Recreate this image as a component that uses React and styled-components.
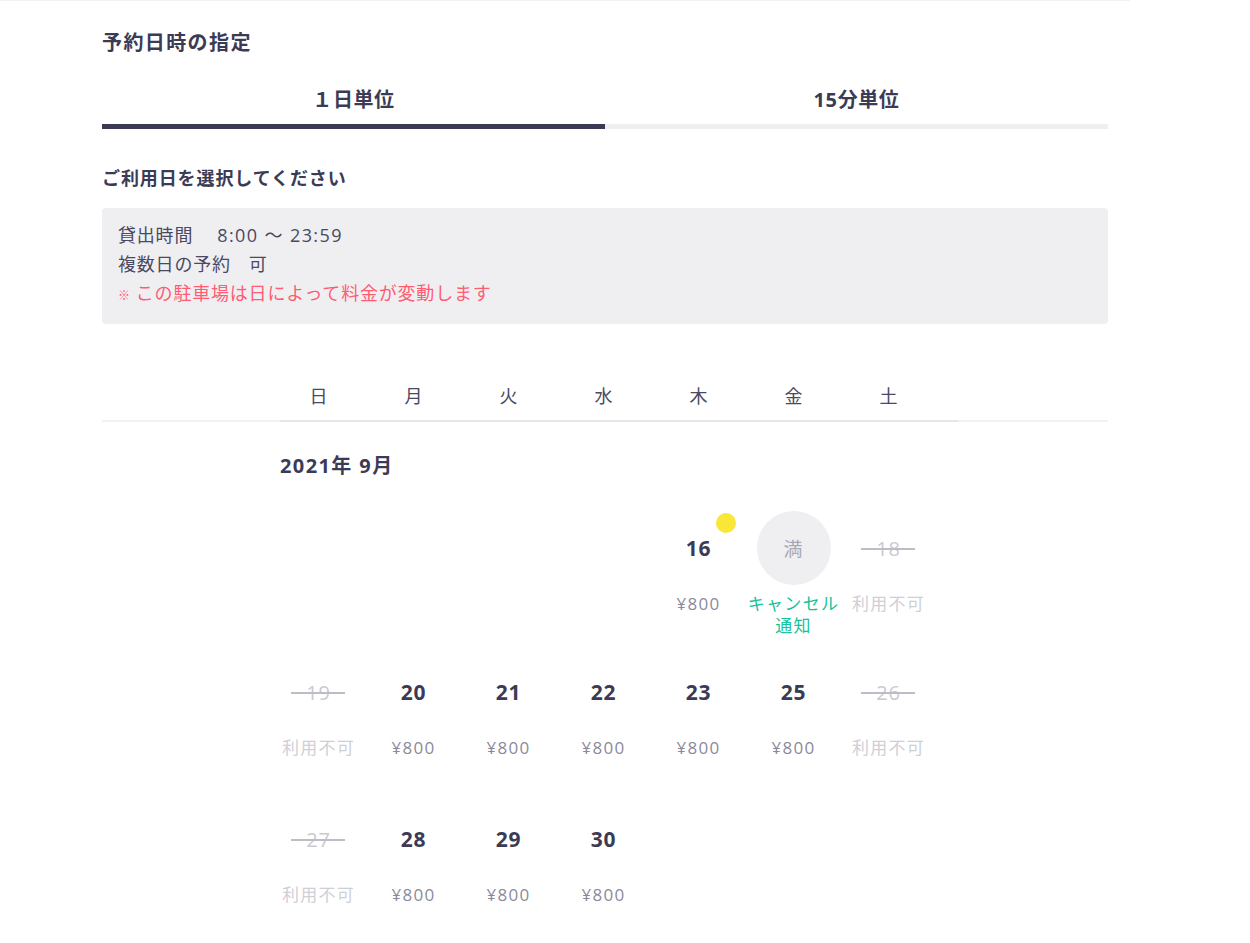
import React from "react";
import styled, { createGlobalStyle } from "styled-components";

const GlobalStyle = createGlobalStyle`
  body {
    margin: 0;
    background: #fff;
    font-family: "Open Sans", "Noto Sans CJK JP", sans-serif;
    color: #3c3b55;
  }
`;

const Page = styled.div`
  width: 1130px;
  box-sizing: border-box;
  border-top: 1px solid #f3f3f5;
  padding: 28px 0 40px 102px;
`;

const Content = styled.div`
  width: 1006px;
`;

const Title = styled.h2`
  margin: 0;
  font-size: 20px;
  font-weight: 700;
  line-height: 28px;
  letter-spacing: 1.4px;
`;

const Tabs = styled.div`
  display: flex;
  margin-top: 14px;
`;

const Tab = styled.div`
  flex: 1;
  height: 58px;
  box-sizing: border-box;
  display: flex;
  align-items: center;
  justify-content: center;
  padding-top: 2px;
  font-size: 20px;
  font-weight: 700;
  letter-spacing: 0.6px;
  border-bottom: 5px solid ${(p) => (p.active ? "#3b3a55" : "#efeff2")};
`;

const SubTitle = styled.h3`
  margin: 36px 0 0;
  font-size: 18px;
  font-weight: 700;
  line-height: 26px;
  letter-spacing: 0.9px;
`;

const InfoBox = styled.div`
  margin-top: 17px;
  background: #efeff2;
  border-radius: 4px;
  padding: 13px 16px 14px;
  font-size: 18px;
  line-height: 29px;
`;

const InfoLine = styled.div`
  color: ${(p) => (p.warn ? "#ff5c72" : "#4a4962")};
  letter-spacing: 0.8px;
`;

const Latin = styled.span`
  letter-spacing: 1.4px;
`;

const Mark = styled.span`
  font-size: 12px;
  margin-right: 5px;
`;

const Gap = styled.span`
  display: inline-block;
  width: ${(p) => p.w}px;
`;

const WeekBar = styled.div`
  margin-top: 47px;
  border-bottom: 2px solid #f2f2f4;
`;

const WeekRow = styled.div`
  margin-left: 178px;
  width: 678px;
  border-bottom: 2px solid #e6e6eb;
  margin-bottom: -2px;
`;

const DayGrid = styled.div`
  display: grid;
  grid-template-columns: repeat(7, 95px);
  margin-left: -9px;
`;

const DayName = styled.div`
  text-align: center;
  font-size: 18px;
  line-height: 26px;
  padding: 12px 0 11px;
  color: #4a4962;
`;

const MonthLabel = styled.div`
  margin: 31px 0 0 178px;
  font-size: 20px;
  font-weight: 700;
  line-height: 26px;
  letter-spacing: 1.4px;
`;

const Week = styled.div`
  display: grid;
  grid-template-columns: repeat(7, 95px);
  margin-left: 169px;
  height: ${(p) => p.h}px;
  align-items: start;
`;

const Cell = styled.div`
  grid-column-start: ${(p) => p.start || "auto"};
  display: flex;
  flex-direction: column;
  align-items: center;
`;

const Circle = styled.div`
  position: relative;
  width: 74px;
  height: 74px;
  border-radius: 50%;
  display: flex;
  align-items: center;
  justify-content: center;
  background: ${(p) => (p.full ? "#efeff2" : "transparent")};
  font-size: ${(p) => (p.full ? "19px" : "21px")};
  font-weight: ${(p) => (p.full ? 400 : 700)};
  letter-spacing: 0.8px;
  color: ${(p) => (p.full ? "#a8a8b4" : p.off ? "#c9c9d2" : "#3c3b55")};
`;

const Strike = styled.span`
  position: relative;
  font-weight: 400;
  font-size: 20px;
  &::after {
    content: "";
    position: absolute;
    left: 50%;
    top: 50%;
    width: 54px;
    height: 1.5px;
    margin-left: -27px;
    background: #bdbdc7;
  }
`;

const Dot = styled.span`
  position: absolute;
  top: 2px;
  right: 0;
  width: 20px;
  height: 20px;
  border-radius: 50%;
  background: #f8e736;
`;

const Note = styled.div`
  margin-top: 8px;
  text-align: center;
  font-size: 17px;
  line-height: 22px;
  letter-spacing: 1.3px;
  color: ${(p) => (p.kind === "off" ? "#cfcfd6" : p.kind === "notify" ? "#14c29b" : "#8b8a9b")};
  white-space: nowrap;
`;

const Spacer = styled.div`
  height: 32px;
`;

const weeks = [
  {
    h: 144,
    start: 5,
    days: [
      { d: 16, dot: true },
      { d: 17, full: true },
      { d: 18, off: true },
    ],
  },
  {
    h: 147,
    days: [
      { d: 19, off: true },
      { d: 20 },
      { d: 21 },
      { d: 22 },
      { d: 23 },
      { d: 25 },
      { d: 26, off: true },
    ],
  },
  {
    h: 110,
    days: [{ d: 27, off: true }, { d: 28 }, { d: 29 }, { d: 30 }],
  },
];

function DayCell({ day, start }) {
  return (
    <Cell start={start}>
      <Circle full={day.full} off={day.off}>
        {day.full ? "満" : day.off ? <Strike>{day.d}</Strike> : day.d}
        {day.dot && <Dot />}
      </Circle>
      {day.full ? (
        <Note kind="notify">
          キャンセル
          <br />
          通知
        </Note>
      ) : day.off ? (
        <Note kind="off">利用不可</Note>
      ) : (
        <Note>¥800</Note>
      )}
    </Cell>
  );
}

export default function App() {
  return (
    <>
      <GlobalStyle />
      <Page>
        <Content>
          <Title>予約日時の指定</Title>
          <Tabs>
            <Tab active>１日単位</Tab>
            <Tab>15分単位</Tab>
          </Tabs>
          <SubTitle>ご利用日を選択してください</SubTitle>
          <InfoBox>
            <InfoLine>
              貸出時間<Gap w={24} />
              <Latin>8:00 〜 23:59</Latin>
            </InfoLine>
            <InfoLine>
              複数日の予約<Gap w={18} />可
            </InfoLine>
            <InfoLine warn>
              <Mark>※</Mark>この駐車場は日によって料金が変動します
            </InfoLine>
          </InfoBox>
          <WeekBar>
            <WeekRow>
              <DayGrid>
                {["日", "月", "火", "水", "木", "金", "土"].map((n) => (
                  <DayName key={n}>{n}</DayName>
                ))}
              </DayGrid>
            </WeekRow>
          </WeekBar>
          <MonthLabel>2021年 9月</MonthLabel>
          <Spacer />
          {weeks.map((w, i) => (
            <Week key={i} h={w.h}>
              {w.days.map((day, j) => (
                <DayCell key={day.d} day={day} start={j === 0 ? w.start : undefined} />
              ))}
            </Week>
          ))}
        </Content>
      </Page>
    </>
  );
}
